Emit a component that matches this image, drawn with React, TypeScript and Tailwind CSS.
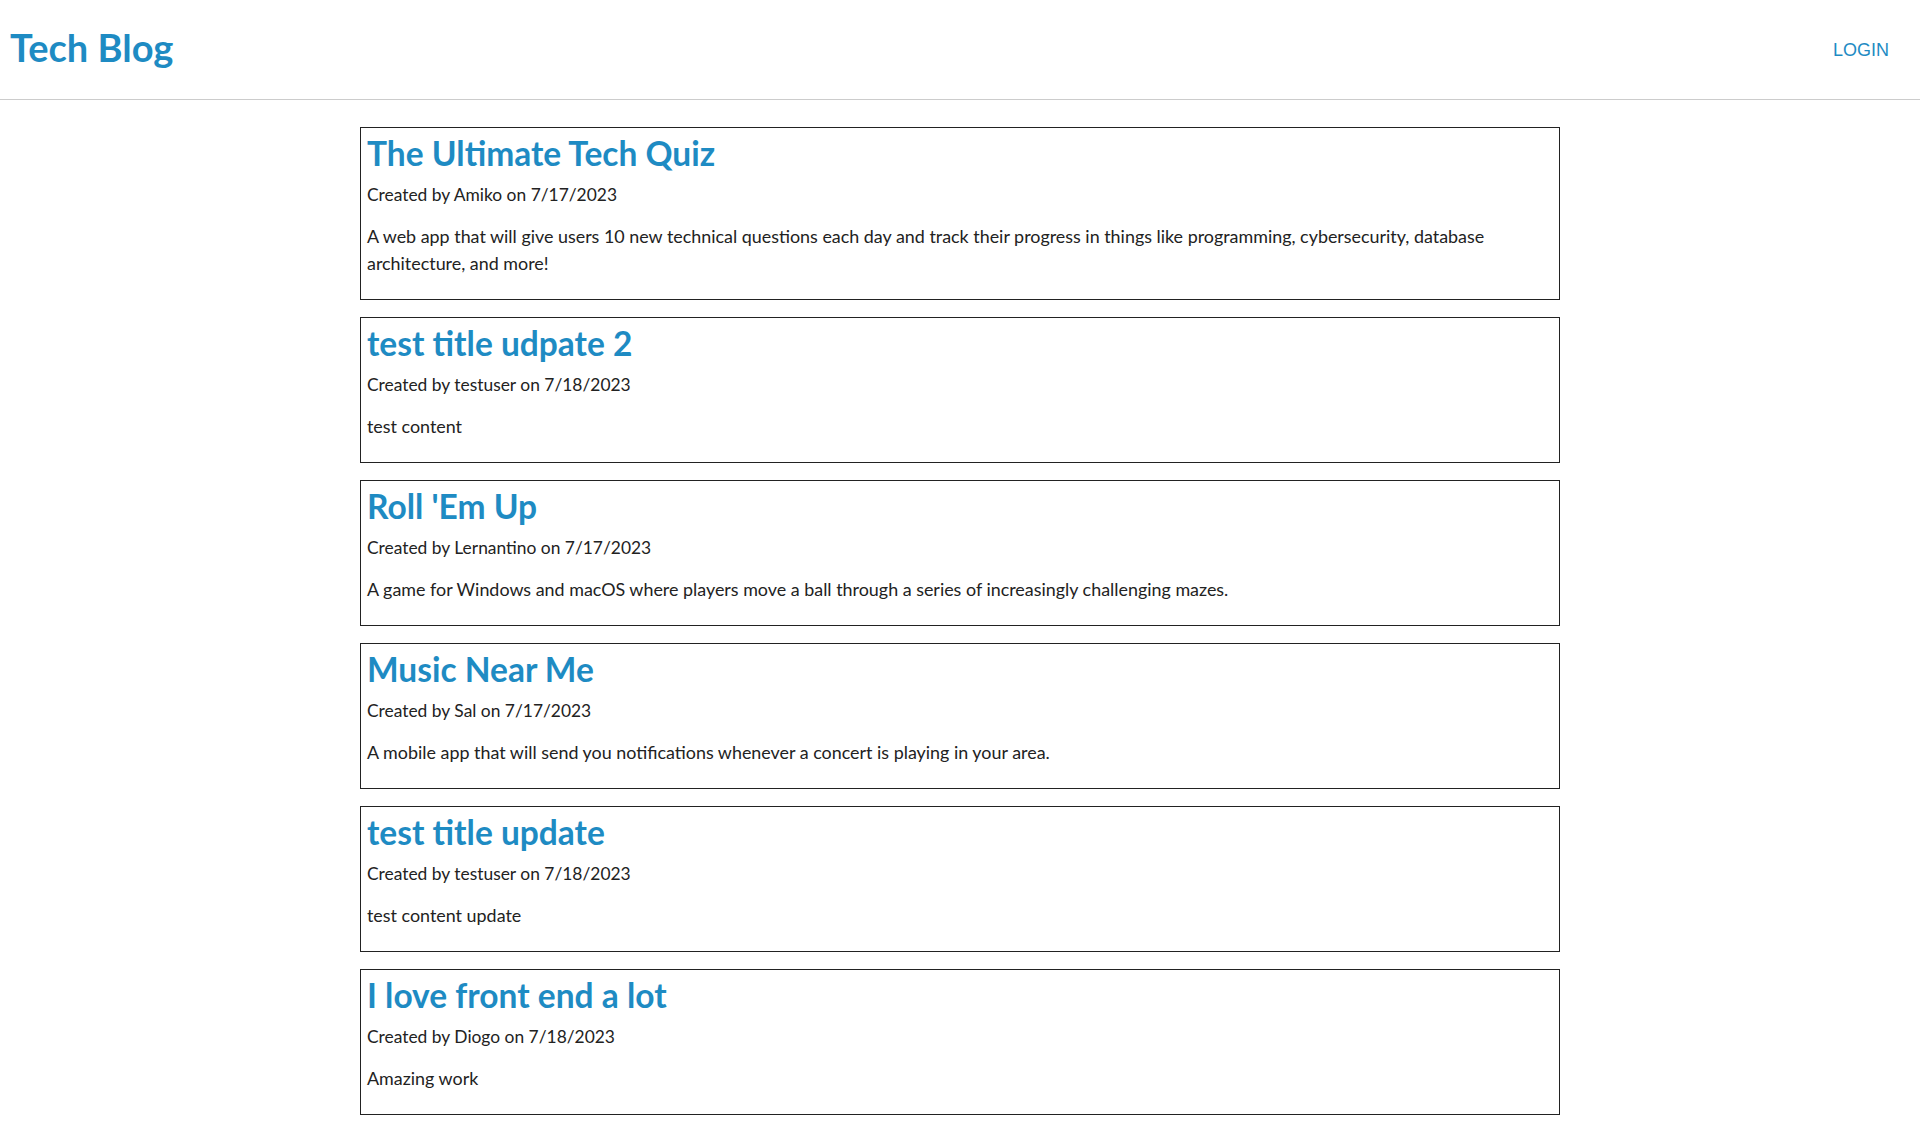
const posts = [
  {
    title: "The Ultimate Tech Quiz",
    author: "Amiko",
    date: "7/17/2023",
    content:
      "A web app that will give users 10 new technical questions each day and track their progress in things like programming, cybersecurity, database architecture, and more!",
  },
  { title: "test title udpate 2", author: "testuser", date: "7/18/2023", content: "test content" },
  {
    title: "Roll 'Em Up",
    author: "Lernantino",
    date: "7/17/2023",
    content:
      "A game for Windows and macOS where players move a ball through a series of increasingly challenging mazes.",
  },
  {
    title: "Music Near Me",
    author: "Sal",
    date: "7/17/2023",
    content: "A mobile app that will send you notifications whenever a concert is playing in your area.",
  },
  { title: "test title update", author: "testuser", date: "7/18/2023", content: "test content update" },
  { title: "I love front end a lot", author: "Diogo", date: "7/18/2023", content: "Amazing work" },
];

const App = () => {
  return (
    <div className="min-h-screen w-full bg-white font-['Lato','Noto_Sans',sans-serif] text-[#222]">
      <header className="flex h-[100px] items-start justify-between border-b border-[#ccc] pl-[10px] pr-[31px]">
        <h1 className="mt-[25px] text-[38px] font-bold leading-[44px] text-[#1e8bc3]">Tech Blog</h1>
        <a href="#" className="mt-[39px] font-['Liberation_Sans',Arial,sans-serif] text-[18px] leading-[22px] text-[#1e8bc3]">
          LOGIN
        </a>
      </header>
      <main className="mx-auto mt-[27px] flex w-[1200px] flex-col gap-[17px]">
        {posts.map((post) => (
          <article key={post.title} className="border border-[#222] px-[6px] pt-[5px] pb-[22px]">
            <h2 className="text-[33.5px] font-bold leading-[40px] text-[#1e8bc3]">{post.title}</h2>
            <p className="mt-[8px] text-[17.4px] leading-[27px]">
              Created by {post.author} on {post.date}
            </p>
            <p className="mt-[15px] text-[17.9px] leading-[27px]">{post.content}</p>
          </article>
        ))}
      </main>
    </div>
  );
};

export default App;
